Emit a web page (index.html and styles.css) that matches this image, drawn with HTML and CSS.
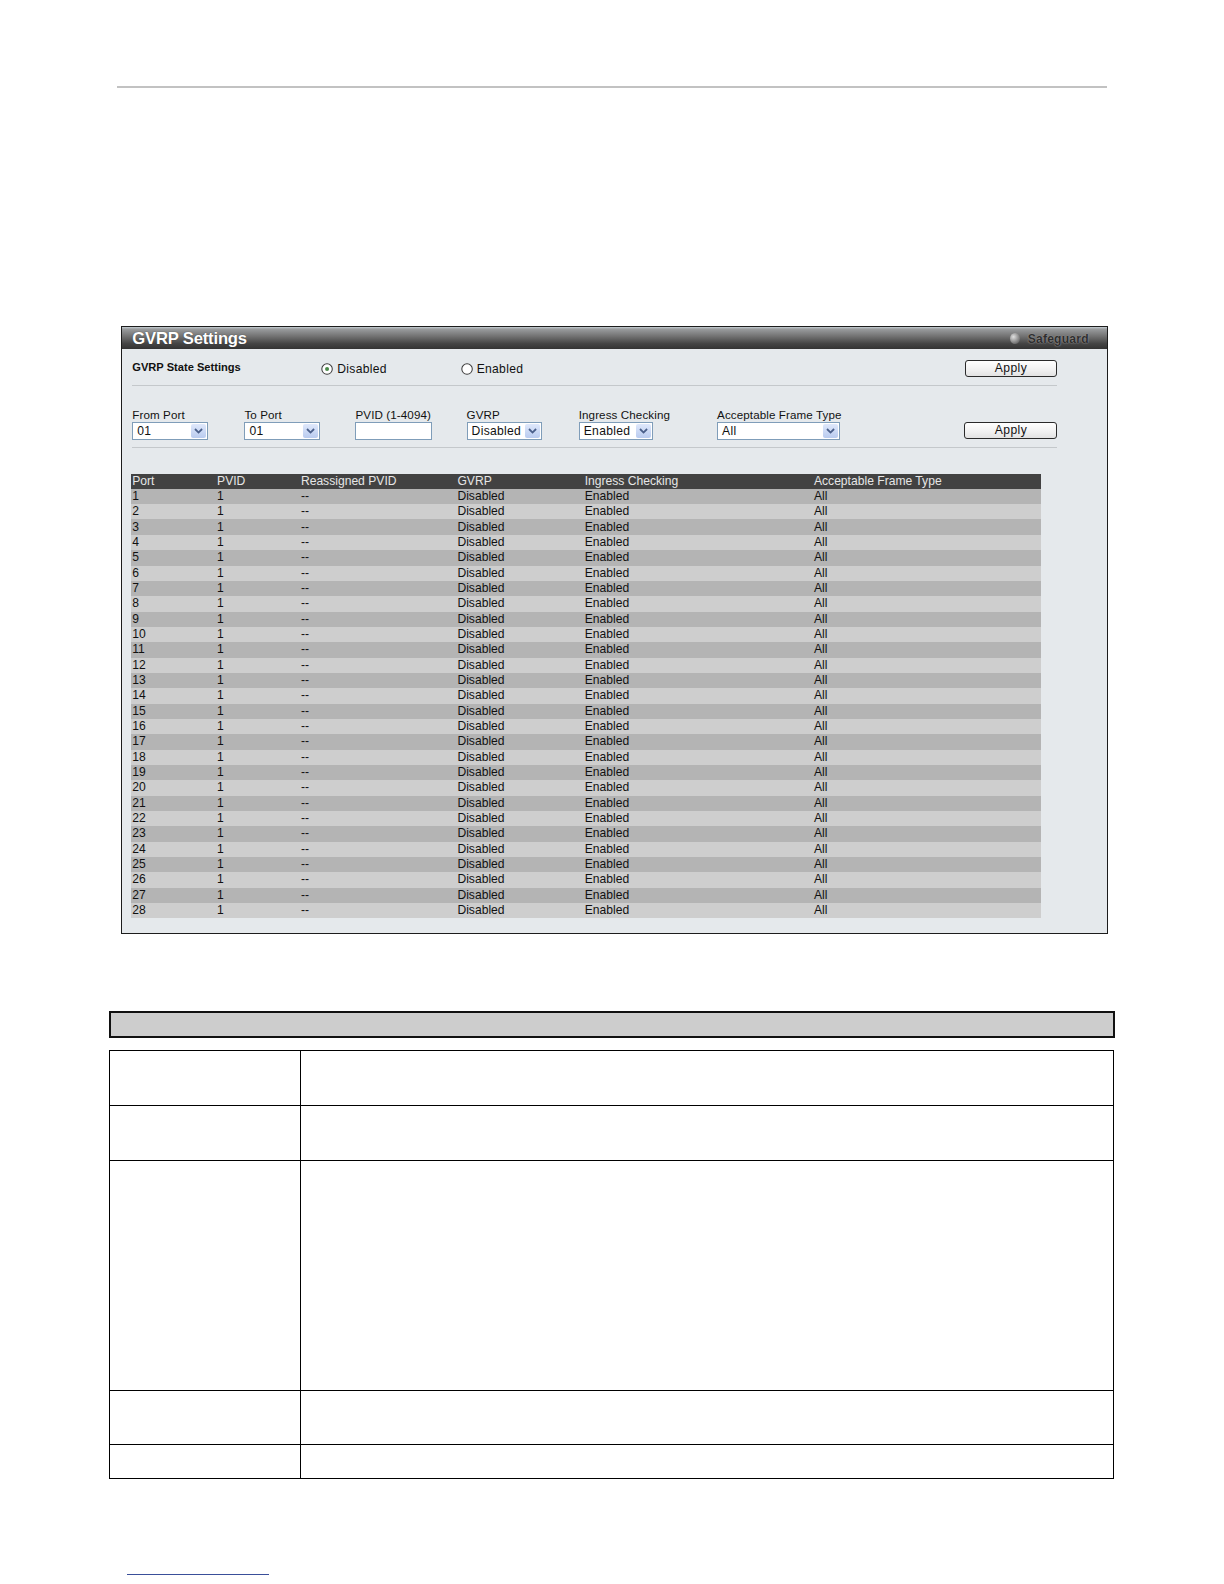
FILE: index.html
```html
<!DOCTYPE html>
<html>
<head>
<meta charset="utf-8">
<title>GVRP Settings</title>
<link rel="stylesheet" href="styles.css">
</head>
<body>
<div class="page">
  <div class="topline"></div>

  <div class="panel">
    <div class="panel-head">
      <span class="panel-title">GVRP Settings</span>
      <span class="safeguard"><span class="sg-dot"></span>Safeguard</span>
    </div>
    <div class="panel-body">
      <div class="state-row">
        <span class="state-label">GVRP State Settings</span>
        <label class="radio"><svg width="12" height="12" viewBox="0 0 12 12"><circle cx="6" cy="6" r="5.2" fill="#fff" stroke="#3a3a3a" stroke-width="1"/><circle cx="6" cy="6" r="2" fill="#4a8a4a"/></svg>Disabled</label>
        <label class="radio"><svg width="12" height="12" viewBox="0 0 12 12"><circle cx="6" cy="6" r="5.2" fill="#fff" stroke="#3a3a3a" stroke-width="1"/></svg>Enabled</label>
        <button class="btn">Apply</button>
      </div>
      <div class="sep"></div>
      <div class="form-row">
        <div class="field"><span class="flabel">From Port</span><div class="select w75"><span>01</span><i class="arrow"><svg width="9" height="6" viewBox="0 0 9 6"><path d="M1 1 L4.5 4.5 L8 1" fill="none" stroke="#4a5f8a" stroke-width="1.8"/></svg></i></div></div>
        <div class="field"><span class="flabel">To Port</span><div class="select w75"><span>01</span><i class="arrow"><svg width="9" height="6" viewBox="0 0 9 6"><path d="M1 1 L4.5 4.5 L8 1" fill="none" stroke="#4a5f8a" stroke-width="1.8"/></svg></i></div></div>
        <div class="field"><span class="flabel">PVID (1-4094)</span><div class="input"></div></div>
        <div class="field"><span class="flabel">GVRP</span><div class="select w75"><span>Disabled</span><i class="arrow"><svg width="9" height="6" viewBox="0 0 9 6"><path d="M1 1 L4.5 4.5 L8 1" fill="none" stroke="#4a5f8a" stroke-width="1.8"/></svg></i></div></div>
        <div class="field"><span class="flabel">Ingress Checking</span><div class="select w74"><span>Enabled</span><i class="arrow"><svg width="9" height="6" viewBox="0 0 9 6"><path d="M1 1 L4.5 4.5 L8 1" fill="none" stroke="#4a5f8a" stroke-width="1.8"/></svg></i></div></div>
        <div class="field"><span class="flabel">Acceptable Frame Type</span><div class="select w122"><span>All</span><i class="arrow"><svg width="9" height="6" viewBox="0 0 9 6"><path d="M1 1 L4.5 4.5 L8 1" fill="none" stroke="#4a5f8a" stroke-width="1.8"/></svg></i></div></div>
        <div class="field field-btn"><button class="btn">Apply</button></div>
      </div>
      <div class="sep"></div>

      <table class="ports">
        <thead>
          <tr><th>Port</th><th>PVID</th><th>Reassigned PVID</th><th>GVRP</th><th>Ingress Checking</th><th>Acceptable Frame Type</th></tr>
        </thead>
        <tbody>
          <tr><td>1</td><td>1</td><td>--</td><td>Disabled</td><td>Enabled</td><td>All</td></tr>
          <tr><td>2</td><td>1</td><td>--</td><td>Disabled</td><td>Enabled</td><td>All</td></tr>
          <tr><td>3</td><td>1</td><td>--</td><td>Disabled</td><td>Enabled</td><td>All</td></tr>
          <tr><td>4</td><td>1</td><td>--</td><td>Disabled</td><td>Enabled</td><td>All</td></tr>
          <tr><td>5</td><td>1</td><td>--</td><td>Disabled</td><td>Enabled</td><td>All</td></tr>
          <tr><td>6</td><td>1</td><td>--</td><td>Disabled</td><td>Enabled</td><td>All</td></tr>
          <tr><td>7</td><td>1</td><td>--</td><td>Disabled</td><td>Enabled</td><td>All</td></tr>
          <tr><td>8</td><td>1</td><td>--</td><td>Disabled</td><td>Enabled</td><td>All</td></tr>
          <tr><td>9</td><td>1</td><td>--</td><td>Disabled</td><td>Enabled</td><td>All</td></tr>
          <tr><td>10</td><td>1</td><td>--</td><td>Disabled</td><td>Enabled</td><td>All</td></tr>
          <tr><td>11</td><td>1</td><td>--</td><td>Disabled</td><td>Enabled</td><td>All</td></tr>
          <tr><td>12</td><td>1</td><td>--</td><td>Disabled</td><td>Enabled</td><td>All</td></tr>
          <tr><td>13</td><td>1</td><td>--</td><td>Disabled</td><td>Enabled</td><td>All</td></tr>
          <tr><td>14</td><td>1</td><td>--</td><td>Disabled</td><td>Enabled</td><td>All</td></tr>
          <tr><td>15</td><td>1</td><td>--</td><td>Disabled</td><td>Enabled</td><td>All</td></tr>
          <tr><td>16</td><td>1</td><td>--</td><td>Disabled</td><td>Enabled</td><td>All</td></tr>
          <tr><td>17</td><td>1</td><td>--</td><td>Disabled</td><td>Enabled</td><td>All</td></tr>
          <tr><td>18</td><td>1</td><td>--</td><td>Disabled</td><td>Enabled</td><td>All</td></tr>
          <tr><td>19</td><td>1</td><td>--</td><td>Disabled</td><td>Enabled</td><td>All</td></tr>
          <tr><td>20</td><td>1</td><td>--</td><td>Disabled</td><td>Enabled</td><td>All</td></tr>
          <tr><td>21</td><td>1</td><td>--</td><td>Disabled</td><td>Enabled</td><td>All</td></tr>
          <tr><td>22</td><td>1</td><td>--</td><td>Disabled</td><td>Enabled</td><td>All</td></tr>
          <tr><td>23</td><td>1</td><td>--</td><td>Disabled</td><td>Enabled</td><td>All</td></tr>
          <tr><td>24</td><td>1</td><td>--</td><td>Disabled</td><td>Enabled</td><td>All</td></tr>
          <tr><td>25</td><td>1</td><td>--</td><td>Disabled</td><td>Enabled</td><td>All</td></tr>
          <tr><td>26</td><td>1</td><td>--</td><td>Disabled</td><td>Enabled</td><td>All</td></tr>
          <tr><td>27</td><td>1</td><td>--</td><td>Disabled</td><td>Enabled</td><td>All</td></tr>
          <tr><td>28</td><td>1</td><td>--</td><td>Disabled</td><td>Enabled</td><td>All</td></tr>
        </tbody>
      </table>
    </div>
  </div>

  <div class="param-head"></div>
  <table class="params">
    <tr class="r1"><td class="c1"></td><td></td></tr>
    <tr class="r2"><td class="c1"></td><td></td></tr>
    <tr class="r3"><td class="c1"></td><td></td></tr>
    <tr class="r4"><td class="c1"></td><td></td></tr>
    <tr class="r5"><td class="c1"></td><td></td></tr>
  </table>

  <div class="footline"></div>
</div>
</body>
</html>
```

FILE: styles.css
```css
html, body {
  margin: 0;
  padding: 0;
  background: #fff;
}
body {
  font-family: "Liberation Sans", Arial, sans-serif;
  color: #111;
}
.page {
  zoom: 1.01;
  padding-top: 85px;
}
.topline {
  margin-left: 116px;
  width: 980px;
  height: 2px;
  background: #c2c2c2;
}

/* Panel */
.panel {
  margin: 236px 0 0 120px;
  width: 975px;
  border: 1px solid #1c1c1c;
  background: #e5e9ec;
}
.panel-head {
  height: 22px;
  background: linear-gradient(#c5ced3 0, #9a9c9e 2px, #6e6e6e 45%, #454545 75%, #333 100%);
  display: flex;
  align-items: center;
  justify-content: space-between;
  padding: 0 18px 0 10px;
}
.panel-title {
  color: #fff;
  font-size: 16.5px;
  font-weight: bold;
  letter-spacing: -0.2px;
  text-shadow: 0 0 1px #333;
  margin-top: 1px;
}
.safeguard {
  display: flex;
  align-items: center;
  font-size: 12px;
  font-weight: bold;
  color: #2e2e2e;
  text-shadow: 0 0 1px #a0a0a0, 0 0 2px #8a8a8a;
  letter-spacing: 0.2px;
  margin-top: 1px;
}
.sg-dot {
  width: 10px;
  height: 11px;
  border-radius: 50%;
  background: radial-gradient(circle at 35% 35%, #e0e0e0 0, #9a9a9a 45%, #444 100%);
  margin-right: 8px;
}
.panel-body {
  padding: 0 0 14px 0;
}

/* state row */
.state-row {
  display: grid;
  grid-template-columns: 187px 138px 499px 92px;
  align-items: center;
  height: 33px;
  padding: 2px 0 0 10px;
}
.state-label {
  font-size: 11px;
  font-weight: bold;
  color: #111;
  margin-top: -2px;
}
.radio {
  display: flex;
  align-items: center;
  font-size: 12px;
  color: #111;
  letter-spacing: 0.3px;
  margin-top: 1px;
}
.radio svg {
  margin-right: 4px;
}
.btn {
  width: 92px;
  height: 17px;
  padding: 0;
  margin: 0;
  border: 1px solid #2a2a2a;
  border-radius: 3px;
  background: linear-gradient(#ffffff, #f0f0f0 60%, #e2e2e2);
  font-family: "Liberation Sans", Arial, sans-serif;
  font-size: 12px;
  color: #111;
  letter-spacing: 0.4px;
  line-height: 15px;
}
.sep {
  margin-left: 10px;
  width: 916px;
  height: 1px;
  background: #c4c8cb;
}

/* form row */
.form-row {
  display: grid;
  grid-template-columns: 111px 110px 110px 111px 137px 245px 92px;
  padding: 22px 0 7px 10px;
  align-items: end;
}
.field {
  display: flex;
  flex-direction: column;
}
.flabel {
  font-size: 11.5px;
  line-height: 14px;
  color: #111;
  letter-spacing: 0.1px;
  white-space: nowrap;
}
.field-btn {
  padding-bottom: 1px;
}
.select, .input {
  box-sizing: border-box;
  height: 18px;
  border: 1px solid #7f9db9;
  background: #fff;
  display: flex;
  align-items: center;
  justify-content: space-between;
  font-size: 12px;
  color: #111;
}
.select span {
  padding-left: 4px;
  letter-spacing: 0.3px;
}
.w75 { width: 75px; }
.w74 { width: 74px; }
.w122 { width: 122px; }
.input { width: 76px; }
.arrow {
  width: 15px;
  height: 14px;
  margin-right: 1px;
  border-radius: 2px;
  background: linear-gradient(#dfe8fb, #b9cbef);
  display: flex;
  align-items: center;
  justify-content: center;
}

/* ports table */
.ports {
  margin: 25px 0 0 9px;
  width: 901px;
  border-collapse: collapse;
  table-layout: fixed;
  font-size: 12px;
}
.ports th, .ports td {
  padding: 0 0 0 1px;
  height: 15.2px;
  line-height: 15px;
  text-align: left;
  font-weight: normal;
  white-space: nowrap;
}
.ports th {
  background: #424242;
  color: #e6e6e6;
  height: 15px;
}
.ports th:nth-child(1) { width: 83px; }
.ports th:nth-child(2) { width: 82px; }
.ports th:nth-child(3) { width: 154px; }
.ports th:nth-child(4) { width: 125px; }
.ports th:nth-child(5) { width: 226px; }
.ports th:nth-child(6) { width: 225px; }
.ports tbody tr:nth-child(odd) td { background: #b4b4b4; }
.ports tbody tr:nth-child(even) td { background: #cecece; }

/* parameter table */
.param-head {
  margin: 77px 0 0 108px;
  width: 996px;
  height: 26px;
  box-sizing: border-box;
  border: 2px solid #111;
  background: #cdcdcd;
}
.params {
  margin: 12px 0 0 108px;
  width: 995px;
  border-collapse: collapse;
  table-layout: fixed;
}
.params td {
  border: 1px solid #000;
  padding: 0;
}
.params td.c1 { width: 188px; }
.params .r1 td { height: 54px; }
.params .r2 td { height: 53px; }
.params .r3 td { height: 227px; }
.params .r4 td { height: 53px; }
.params .r5 td { height: 32px; }

.footline {
  margin: 94px 0 0 126px;
  width: 140px;
  height: 1px;
  background: #3a4f9a;
}
```
